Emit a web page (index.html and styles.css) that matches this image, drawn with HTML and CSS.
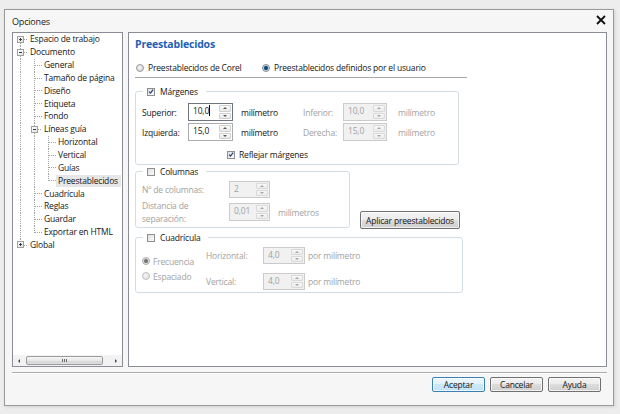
FILE: index.html
```html
<!DOCTYPE html>
<html lang="es">
<head>
<meta charset="utf-8">
<title>Opciones</title>
<link rel="stylesheet" href="styles.css">
</head>
<body>
<div class="dialog">
  <div class="titlebar">
    <span class="title">Opciones</span>
    <svg class="close" width="10" height="10" viewBox="0 0 10 10"><path d="M1 1 L9 9 M9 1 L1 9" stroke="#111" stroke-width="1.8" fill="none"/></svg>
  </div>
  <div class="main">
    <div class="tree">
      <div class="nodes">
        <div class="row"><span class="g x plus below"><i></i></span><span class="lbl">Espacio de trabajo</span></div>
        <div class="row"><span class="g x minus above below"><i></i></span><span class="lbl">Documento</span></div>
        <div class="row"><span class="g v"></span><span class="g t"></span><span class="lbl">General</span></div>
        <div class="row"><span class="g v"></span><span class="g t"></span><span class="lbl">Tamaño de página</span></div>
        <div class="row"><span class="g v"></span><span class="g t"></span><span class="lbl">Diseño</span></div>
        <div class="row"><span class="g v"></span><span class="g t"></span><span class="lbl">Etiqueta</span></div>
        <div class="row"><span class="g v"></span><span class="g t"></span><span class="lbl">Fondo</span></div>
        <div class="row"><span class="g v"></span><span class="g x minus above below"><i></i></span><span class="lbl">Líneas guía</span></div>
        <div class="row"><span class="g v"></span><span class="g v"></span><span class="g t"></span><span class="lbl">Horizontal</span></div>
        <div class="row"><span class="g v"></span><span class="g v"></span><span class="g t"></span><span class="lbl">Vertical</span></div>
        <div class="row"><span class="g v"></span><span class="g v"></span><span class="g t"></span><span class="lbl">Guías</span></div>
        <div class="row"><span class="g v"></span><span class="g v"></span><span class="g l"></span><span class="lbl sel">Preestablecidos</span></div>
        <div class="row"><span class="g v"></span><span class="g t"></span><span class="lbl">Cuadrícula</span></div>
        <div class="row"><span class="g v"></span><span class="g t"></span><span class="lbl">Reglas</span></div>
        <div class="row"><span class="g v"></span><span class="g t"></span><span class="lbl">Guardar</span></div>
        <div class="row"><span class="g v"></span><span class="g l"></span><span class="lbl">Exportar en HTML</span></div>
        <div class="row"><span class="g x plus above"><i></i></span><span class="lbl">Global</span></div>
      </div>
      <div class="hscroll">
        <span class="sb-btn"><i class="tri-l"></i></span>
        <span class="thumb"><i class="grip"></i><i class="grip"></i><i class="grip"></i></span>
        <span class="track"></span>
        <span class="sb-btn"><i class="tri-r"></i></span>
      </div>
    </div>

    <div class="panel">
      <h1 class="heading">Preestablecidos</h1>
      <div class="presets">
        <span class="opt opt1"><span class="rd"></span>Preestablecidos de Corel</span>
        <span class="opt"><span class="rd on"></span>Preestablecidos definidos por el usuario</span>
      </div>
      <div class="rule"></div>

      <fieldset class="group g-margins">
        <legend><span class="cb"><svg width="7" height="7" viewBox="0 0 7 7"><path d="M1.2 3.6 L2.9 5.4 L6 1.2" fill="none" stroke="#24407e" stroke-width="1.4"/></svg></span>Márgenes</legend>
        <div class="mgrid">
          <span class="fl">Superior:</span>
          <span class="spin focus"><span class="val">10,0<span class="caret"></span></span><span class="arrows"><span class="up"></span><span class="dn"></span></span></span>
          <span class="unit">milímetro</span>
          <span class="fl dis">Inferior:</span>
          <span class="spin dis"><span class="val">10,0</span><span class="arrows"><span class="up"></span><span class="dn"></span></span></span>
          <span class="unit u2 dis">milímetro</span>

          <span class="fl">Izquierda:</span>
          <span class="spin"><span class="val">15,0</span><span class="arrows"><span class="up"></span><span class="dn"></span></span></span>
          <span class="unit">milímetro</span>
          <span class="fl dis">Derecha:</span>
          <span class="spin dis"><span class="val">15,0</span><span class="arrows"><span class="up"></span><span class="dn"></span></span></span>
          <span class="unit u2 dis">milímetro</span>

          <span class="reflect"><span class="cb"><svg width="7" height="7" viewBox="0 0 7 7"><path d="M1.2 3.6 L2.9 5.4 L6 1.2" fill="none" stroke="#24407e" stroke-width="1.4"/></svg></span>Reflejar márgenes</span>
        </div>
      </fieldset>

      <div class="colrow">
        <fieldset class="group g-cols">
          <legend><span class="cb"></span>Columnas</legend>
          <div class="cgrid">
            <span class="fl dis">Nº de columnas:</span>
            <span class="spin dis"><span class="val">2</span><span class="arrows"><span class="up"></span><span class="dn"></span></span></span>
            <span></span>
            <span class="fl dis two">Distancia de<br>separación:</span>
            <span class="spin dis tall"><span class="val">0,01</span><span class="arrows"><span class="up"></span><span class="dn"></span></span></span>
            <span class="unit dis">milímetros</span>
          </div>
        </fieldset>
        <button class="btn apply" type="button">Aplicar preestablecidos</button>
      </div>

      <fieldset class="group g-grid">
        <legend><span class="cb"></span>Cuadrícula</legend>
        <div class="gridwrap">
          <div class="radios">
            <span class="opt dis"><span class="rd on dis"></span>Frecuencia</span>
            <span class="opt dis"><span class="rd dis"></span>Espaciado</span>
          </div>
          <div class="ggrid">
            <span class="fl dis">Horizontal:</span>
            <span class="spin dis"><span class="val">4,0</span><span class="arrows"><span class="up"></span><span class="dn"></span></span></span>
            <span class="unit dis">por milímetro</span>
            <span class="fl dis">Vertical:</span>
            <span class="spin dis"><span class="val">4,0</span><span class="arrows"><span class="up"></span><span class="dn"></span></span></span>
            <span class="unit dis">por milímetro</span>
          </div>
        </div>
      </fieldset>
    </div>
  </div>
  <div class="sep"></div>
  <div class="actions">
    <button class="btn default" type="button">Aceptar</button>
    <button class="btn" type="button">Cancelar</button>
    <button class="btn" type="button">Ayuda</button>
  </div>
</div>
</body>
</html>
```
FILE: styles.css
```css
* { box-sizing: border-box; }
html, body { margin: 0; }
body {
  width: 620px; height: 414px; overflow: hidden;
  background: #ededed;
  padding: 9px 0 0 4px;
  font-family: "Open Sans", "Noto Sans", sans-serif;
  font-size: 8.5px;
  letter-spacing: -0.18px;
  color: #161616;
  --dv: repeating-linear-gradient(to bottom, #a3a3a3 0 1px, transparent 1px 2px);
  --dh: repeating-linear-gradient(to right, #a3a3a3 0 1px, transparent 1px 2px);
}
.dialog {
  width: 610px; height: 397px;
  border: 1px solid #9a9a9a;
  background: #f6f6f6;
  box-shadow: 1px 1px 3px rgba(0,0,0,.12);
  display: flex; flex-direction: column;
  padding: 0 6px 0 7px;
}
.titlebar {
  height: 22px; flex: none;
  display: flex; align-items: center; justify-content: space-between;
  padding-top: 1px;
}
.title { font-size: 9px; color: #222; }
.close { margin-right: 1px; margin-top: -4px; }

.main { height: 335px; flex: none; display: flex; gap: 5px; }

/* tree */
.tree {
  width: 111px; flex: none;
  border: 1px solid #8a8d94;
  background: #fff;
  display: flex; flex-direction: column;
}
.nodes { flex: 1; padding-left: 1px; overflow: hidden; }
.row { height: 12.85px; display: flex; align-items: center; white-space: nowrap; }
.lbl { margin-left: 2px; line-height: 12px; }
.lbl.sel { background: #e6e6e6; margin-left: 0; padding: 0 3px 0 2px; }
.g { width: 14px; height: 100%; flex: none; background-repeat: no-repeat; }
.v { background-image: var(--dv); background-size: 1px 100%; background-position: 6px 0; }
.t { background-image: var(--dv), var(--dh); background-size: 1px 100%, 7px 1px; background-position: 6px 0, 7px 6px; }
.l { background-image: var(--dv), var(--dh); background-size: 1px 7px, 7px 1px; background-position: 6px 0, 7px 6px; }
.x { display: flex; align-items: center; padding-left: 3px;
     background-image: var(--dh); background-size: 4px 1px; background-position: 10px 6px; }
.x.below { background-image: var(--dh), var(--dv); background-size: 4px 1px, 1px 3px; background-position: 10px 6px, 6px 10px; }
.x.above { background-image: var(--dh), var(--dv); background-size: 4px 1px, 1px 3px; background-position: 10px 6px, 6px 0; }
.x.above.below { background-image: var(--dh), var(--dv), var(--dv); background-size: 4px 1px, 1px 3px, 1px 3px; background-position: 10px 6px, 6px 0, 6px 10px; }
.x i {
  display: block; width: 7px; height: 7px;
  border: 1px solid #a0a0a0;
  background: linear-gradient(135deg, #fff, #e2e2e2);
}
.x.minus i { background: linear-gradient(#3a3a3a, #3a3a3a) center / 3px 1px no-repeat, linear-gradient(135deg, #fff, #e2e2e2); }
.x.plus i { background: linear-gradient(#3a3a3a, #3a3a3a) center / 3px 1px no-repeat, linear-gradient(#3a3a3a, #3a3a3a) center / 1px 3px no-repeat, linear-gradient(135deg, #fff, #e2e2e2); }

.hscroll { height: 11px; flex: none; display: flex; align-items: center; background: #f2f2f2; }
.sb-btn { width: 12px; height: 100%; display: flex; align-items: center; justify-content: center; flex: none; }
.tri-l { width: 0; height: 0; border-top: 2px solid transparent; border-bottom: 2px solid transparent; border-right: 2px solid #444; }
.tri-r { width: 0; height: 0; border-top: 2px solid transparent; border-bottom: 2px solid transparent; border-left: 2px solid #444; }
.thumb {
  width: 77px; height: 9px; margin-left: 1px; flex: none;
  border: 1px solid #9c9c9c; border-radius: 2px;
  background: linear-gradient(#f6f6f6, #e8e8e8 50%, #d6d6d6 50%, #dcdcdc);
  display: flex; align-items: center; justify-content: center; gap: 1px;
}
.grip { width: 1px; height: 3px; background: #6a6a6a; }
.track { flex: 1; }

/* right panel */
.panel {
  flex: 1;
  border: 1px solid #8a8d94;
  background: #fff;
  padding: 4px 6px 0;
}
.heading { margin: 0; font-size: 10.5px; letter-spacing: -0.2px; line-height: 14px; font-weight: 700; color: #1f5fb5; }
.presets { margin-top: 10px; height: 13px; display: flex; align-items: center; }
.opt { display: flex; align-items: center; gap: 4px; white-space: nowrap; }
.opt1 { width: 127px; padding-left: 1px; }
.rd {
  width: 8px; height: 8px; border-radius: 50%; flex: none;
  border: 1px solid #979797;
  background: radial-gradient(circle at 40% 40%, #f6f6f6, #cfcfcf);
}
.rd.on { background: radial-gradient(circle, #17466f 0 1.5px, #4f8ab8 2px, #e4e4e4 2.7px, #cfcfcf); border-color: #7f8a96; }
.rd.on.dis { background: radial-gradient(circle, #757575 0 1.5px, #a8a8a8 2px, #eeeeee 2.7px, #d8d8d8); border-color: #ababab; }
.rd.dis { border-color: #bdbdbd; background: radial-gradient(circle at 40% 40%, #f8f8f8, #dadada); }
.rule { margin-top: 3px; width: 332px; height: 1px; background: #a7a7a7; }

.group {
  margin: 0; min-width: 0;
  border: 1px solid #d6dde2; border-radius: 3px;
  padding: 0 6px;
}
.group legend {
  margin-left: 1px; padding: 0 8px 0 4px;
  line-height: 13px; height: 13px;
  display: flex; align-items: center; gap: 5px; white-space: nowrap;
}
.cb {
  width: 8px; height: 8px; flex: none;
  border: 1px solid #8e8f8f;
  background: linear-gradient(135deg, #dedede, #fbfbfb);
  display: flex; align-items: center; justify-content: center;
}
.cb svg { display: block; }

.g-margins { width: 324px; margin-top: 7px; padding-top: 5px; padding-bottom: 3px; }
.mgrid {
  display: grid;
  grid-template-columns: 46px 45px 70px 40px 44px auto;
  grid-template-rows: 18px 18px auto;
  row-gap: 2px;
  align-items: center;
}
.fl { white-space: nowrap; }
.dis { color: #a2a2a2; }
.unit { padding-left: 8px; white-space: nowrap; }
.unit.u2 { padding-left: 11px; }
.reflect { grid-column: 1 / -1; padding-left: 85px; margin-top: 5px; height: 13px; display: flex; align-items: center; gap: 4px; }

.spin {
  align-self: stretch;
  display: flex;
  border: 1px solid #a9abb0;
  background: #fff;
}
.spin.focus { border-color: #6f7680; }
.spin.dis { background: #f1f1f1; border-color: #cbcbcb; }
.spin .val { flex: 1; padding: 1px 0 0 4px; line-height: 12px; white-space: nowrap; }
.caret { display: inline-block; width: 1px; height: 11px; background: #000; vertical-align: -2px; }
.arrows { width: 12px; flex: none; display: flex; flex-direction: column; gap: 1px; margin: 1px 1px 1px 0; }
.arrows span {
  flex: 1; border: 1px solid #cfcfcf; border-radius: 1px;
  background: linear-gradient(#fbfbfb, #e8e8e8);
  display: flex; align-items: center; justify-content: center;
}
.arrows .up::before { content: ""; border-left: 2px solid transparent; border-right: 2px solid transparent; border-bottom: 2px solid #5b5b5b; }
.arrows .dn::before { content: ""; border-left: 2px solid transparent; border-right: 2px solid transparent; border-top: 2px solid #5b5b5b; }
.spin.dis .arrows span { border-color: #dadada; background: linear-gradient(#f7f7f7, #ececec); }
.spin.dis .arrows .up::before { border-bottom-color: #a8a8a8; }
.spin.dis .arrows .dn::before { border-top-color: #a8a8a8; }

.colrow { display: flex; align-items: flex-end; gap: 10px; }
.g-cols { width: 215px; padding-top: 3px; padding-bottom: 2px; }
.cgrid {
  display: grid;
  grid-template-columns: 87px 41px auto;
  grid-template-rows: 17px auto;
  row-gap: 1px;
  align-items: center;
}
.two { line-height: 13px; }
.spin.tall { align-self: center; height: 18px; }

.btn {
  font: inherit; color: #161616; letter-spacing: inherit;
  border: 1px solid #707070; border-radius: 2px;
  background: linear-gradient(#f3f3f3, #ebebeb 50%, #dddddd 50%, #cfcfcf);
  padding: 0; margin: 0;
  display: flex; align-items: center; justify-content: center;
  box-shadow: inset 0 0 0 1px rgba(255,255,255,.7);
}
.apply { width: 100px; height: 18px; margin-bottom: -1px; }

.g-grid { width: 328px; margin-top: 3px; padding-top: 3px; padding-bottom: 2px; }
.gridwrap { display: flex; align-items: center; }
.radios { width: 64px; flex: none; display: flex; flex-direction: column; }
.radios .opt { height: 15px; gap: 3px; }
.ggrid {
  display: grid;
  grid-template-columns: 57px 42px auto;
  grid-template-rows: 17px 17px;
  row-gap: 9px;
  align-items: center;
}
.ggrid .unit { padding-left: 3px; }

.sep { margin-top: 5px; height: 2px; flex: none; border-top: 1px solid #acacac; border-bottom: 1px solid #fff; }
.actions { margin-top: 3px; height: 15px; flex: none; display: flex; justify-content: flex-end; gap: 5px; padding-right: 6px; }
.actions .btn { width: 53px; height: 15px; }
.btn.default { border-color: #3c7fb1; background: linear-gradient(#eef7fd, #e0f1fb 50%, #cde9f9 50%, #c0e2f6); }
```
